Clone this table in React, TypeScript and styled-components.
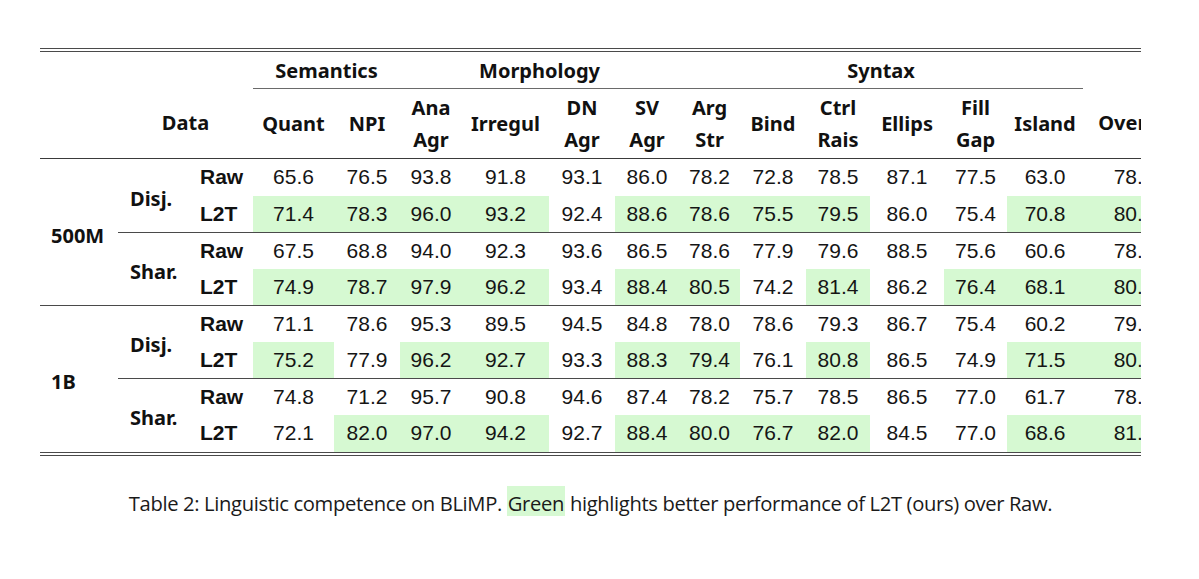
import React from "react";
import styled, { createGlobalStyle } from "styled-components";

const Global = createGlobalStyle`
  html, body { margin: 0; padding: 0; background: #ffffff; }
  body { font-family: "Noto Sans", "Liberation Sans", sans-serif; color: #111; }
`;

const Page = styled.div`
  padding: 48px 0 0 40px;
  width: 1101px;
`;

const Clip = styled.div`
  width: 1101px;
  overflow: hidden;
  border-top: 4px double #4a4a4a;
  border-bottom: 4px double #4a4a4a;
`;

const Table = styled.table`
  border-collapse: collapse;
  table-layout: fixed;
  width: 1145px;
`;

const GroupTh = styled.th<{ $rule?: boolean }>`
  font-family: "Noto Sans", sans-serif;
  font-weight: 700;
  font-size: 20px;
  height: 36px;
  padding: 0;
  text-align: center;
  vertical-align: middle;
  border-bottom: ${(p) => (p.$rule ? "1px solid #6a6a6a" : "none")};
`;

const ColTh = styled.th`
  font-family: "Noto Sans", sans-serif;
  font-weight: 700;
  font-size: 20px;
  line-height: 32px;
  height: 69px;
  padding: 0;
  text-align: center;
  vertical-align: middle;
  border-bottom: 1px solid #3a3a3a;
  white-space: nowrap;
`;

const Row = styled.tr<{ $rule?: "full" | "part" }>`
  height: ${(p) => (p.$rule ? "36px" : "37px")};
  & > td {
    border-top: ${(p) => (p.$rule ? "1px solid #4a4a4a" : "none")};
  }
`;

const SizeCell = styled.td`
  font-family: "Noto Sans", sans-serif;
  font-weight: 700;
  font-size: 20px;
  padding: 6px 0 0 11px;
  text-align: left;
  vertical-align: middle;
`;

const SplitCell = styled.td`
  font-family: "Noto Sans", sans-serif;
  font-weight: 700;
  font-size: 20px;
  padding: 5px 0 0 12px;
  text-align: left;
  vertical-align: middle;
`;

const KindCell = styled.td`
  font-family: "Liberation Sans", Arial, sans-serif;
  font-weight: 700;
  font-size: 21px;
  padding: 0 0 0 10px;
  text-align: left;
  vertical-align: middle;
`;

const Num = styled.td<{ $hi?: boolean }>`
  font-family: "Liberation Sans", Arial, sans-serif;
  font-size: 21px;
  color: #151515;
  padding: 0;
  text-align: center;
  vertical-align: middle;
  background: ${(p) => (p.$hi ? "#d6f9d2" : "transparent")};
`;

const Caption = styled.p`
  margin: 34px 0 0;
  text-align: center;
  font-family: "Open Sans", "Noto Sans", sans-serif;
  font-size: 20.2px;
  line-height: 26px;
  letter-spacing: -0.35px;
  color: #1a1a1a;
`;

const Mark = styled.span`
  background: #d6f9d2;
  padding: 3px 1px;
`;

const widths = [78, 72, 63, 81, 66, 62, 87, 66, 64, 61, 66, 64, 74, 63, 76, 102];

const cols: string[][] = [
  ["Quant"],
  ["NPI"],
  ["Ana", "Agr"],
  ["Irregul"],
  ["DN", "Agr"],
  ["SV", "Agr"],
  ["Arg", "Str"],
  ["Bind"],
  ["Ctrl", "Rais"],
  ["Ellips"],
  ["Fill", "Gap"],
  ["Island"],
  ["Overall"],
];

type DataRow = { kind: string; vals: string[]; hi: number[] };

const blocks: { size: string; splits: { name: string; rows: DataRow[] }[] }[] = [
  {
    size: "500M",
    splits: [
      {
        name: "Disj.",
        rows: [
          { kind: "Raw", vals: ["65.6", "76.5", "93.8", "91.8", "93.1", "86.0", "78.2", "72.8", "78.5", "87.1", "77.5", "63.0", "78.9"], hi: [] },
          { kind: "L2T", vals: ["71.4", "78.3", "96.0", "93.2", "92.4", "88.6", "78.6", "75.5", "79.5", "86.0", "75.4", "70.8", "80.9"], hi: [0, 1, 2, 3, 5, 6, 7, 8, 11, 12] },
        ],
      },
      {
        name: "Shar.",
        rows: [
          { kind: "Raw", vals: ["67.5", "68.8", "94.0", "92.3", "93.6", "86.5", "78.6", "77.9", "79.6", "88.5", "75.6", "60.6", "78.7"], hi: [] },
          { kind: "L2T", vals: ["74.9", "78.7", "97.9", "96.2", "93.4", "88.4", "80.5", "74.2", "81.4", "86.2", "76.4", "68.1", "80.8"], hi: [0, 1, 2, 3, 5, 6, 8, 10, 11, 12] },
        ],
      },
    ],
  },
  {
    size: "1B",
    splits: [
      {
        name: "Disj.",
        rows: [
          { kind: "Raw", vals: ["71.1", "78.6", "95.3", "89.5", "94.5", "84.8", "78.0", "78.6", "79.3", "86.7", "75.4", "60.2", "79.3"], hi: [] },
          { kind: "L2T", vals: ["75.2", "77.9", "96.2", "92.7", "93.3", "88.3", "79.4", "76.1", "80.8", "86.5", "74.9", "71.5", "80.6"], hi: [0, 2, 3, 5, 6, 8, 11, 12] },
        ],
      },
      {
        name: "Shar.",
        rows: [
          { kind: "Raw", vals: ["74.8", "71.2", "95.7", "90.8", "94.6", "87.4", "78.2", "75.7", "78.5", "86.5", "77.0", "61.7", "78.7"], hi: [] },
          { kind: "L2T", vals: ["72.1", "82.0", "97.0", "94.2", "92.7", "88.4", "80.0", "76.7", "82.0", "84.5", "77.0", "68.6", "81.2"], hi: [1, 2, 3, 5, 6, 7, 8, 11, 12] },
        ],
      },
    ],
  },
];

export default function App() {
  return (
    <>
      <Global />
      <Page>
        <Clip>
          <Table>
            <colgroup>
              {widths.map((w, i) => (
                <col key={i} style={{ width: w }} />
              ))}
            </colgroup>
            <thead>
              <tr>
                <GroupTh colSpan={3} />
                <GroupTh colSpan={2} $rule>Semantics</GroupTh>
                <GroupTh colSpan={4} $rule>Morphology</GroupTh>
                <GroupTh colSpan={6} $rule>Syntax</GroupTh>
                <GroupTh />
              </tr>
              <tr>
                <ColTh />
                <ColTh colSpan={2}>Data</ColTh>
                {cols.map((c, i) => (
                  <ColTh key={i}>
                    {c.map((line, j) => (
                      <React.Fragment key={j}>
                        {j > 0 && <br />}
                        {line}
                      </React.Fragment>
                    ))}
                  </ColTh>
                ))}
              </tr>
            </thead>
            <tbody>
              {blocks.map((b, bi) =>
                b.splits.map((s, si) =>
                  s.rows.map((r, ri) => {
                    const first = si === 0 && ri === 0;
                    const rule = ri === 0 && (bi > 0 || si > 0) ? (si === 0 ? "full" : "part") : undefined;
                    return (
                      <Row key={`${bi}-${si}-${ri}`} $rule={rule}>
                        {first && <SizeCell rowSpan={4}>{b.size}</SizeCell>}
                        {ri === 0 && <SplitCell rowSpan={2}>{s.name}</SplitCell>}
                        <KindCell>{r.kind}</KindCell>
                        {r.vals.map((v, vi) => (
                          <Num key={vi} $hi={r.hi.includes(vi)}>
                            {v}
                          </Num>
                        ))}
                      </Row>
                    );
                  })
                )
              )}
            </tbody>
          </Table>
        </Clip>
        <Caption>
          Table 2: Linguistic competence on BLiMP. <Mark>Green</Mark> highlights better performance of L2T (ours) over Raw.
        </Caption>
      </Page>
    </>
  );
}
